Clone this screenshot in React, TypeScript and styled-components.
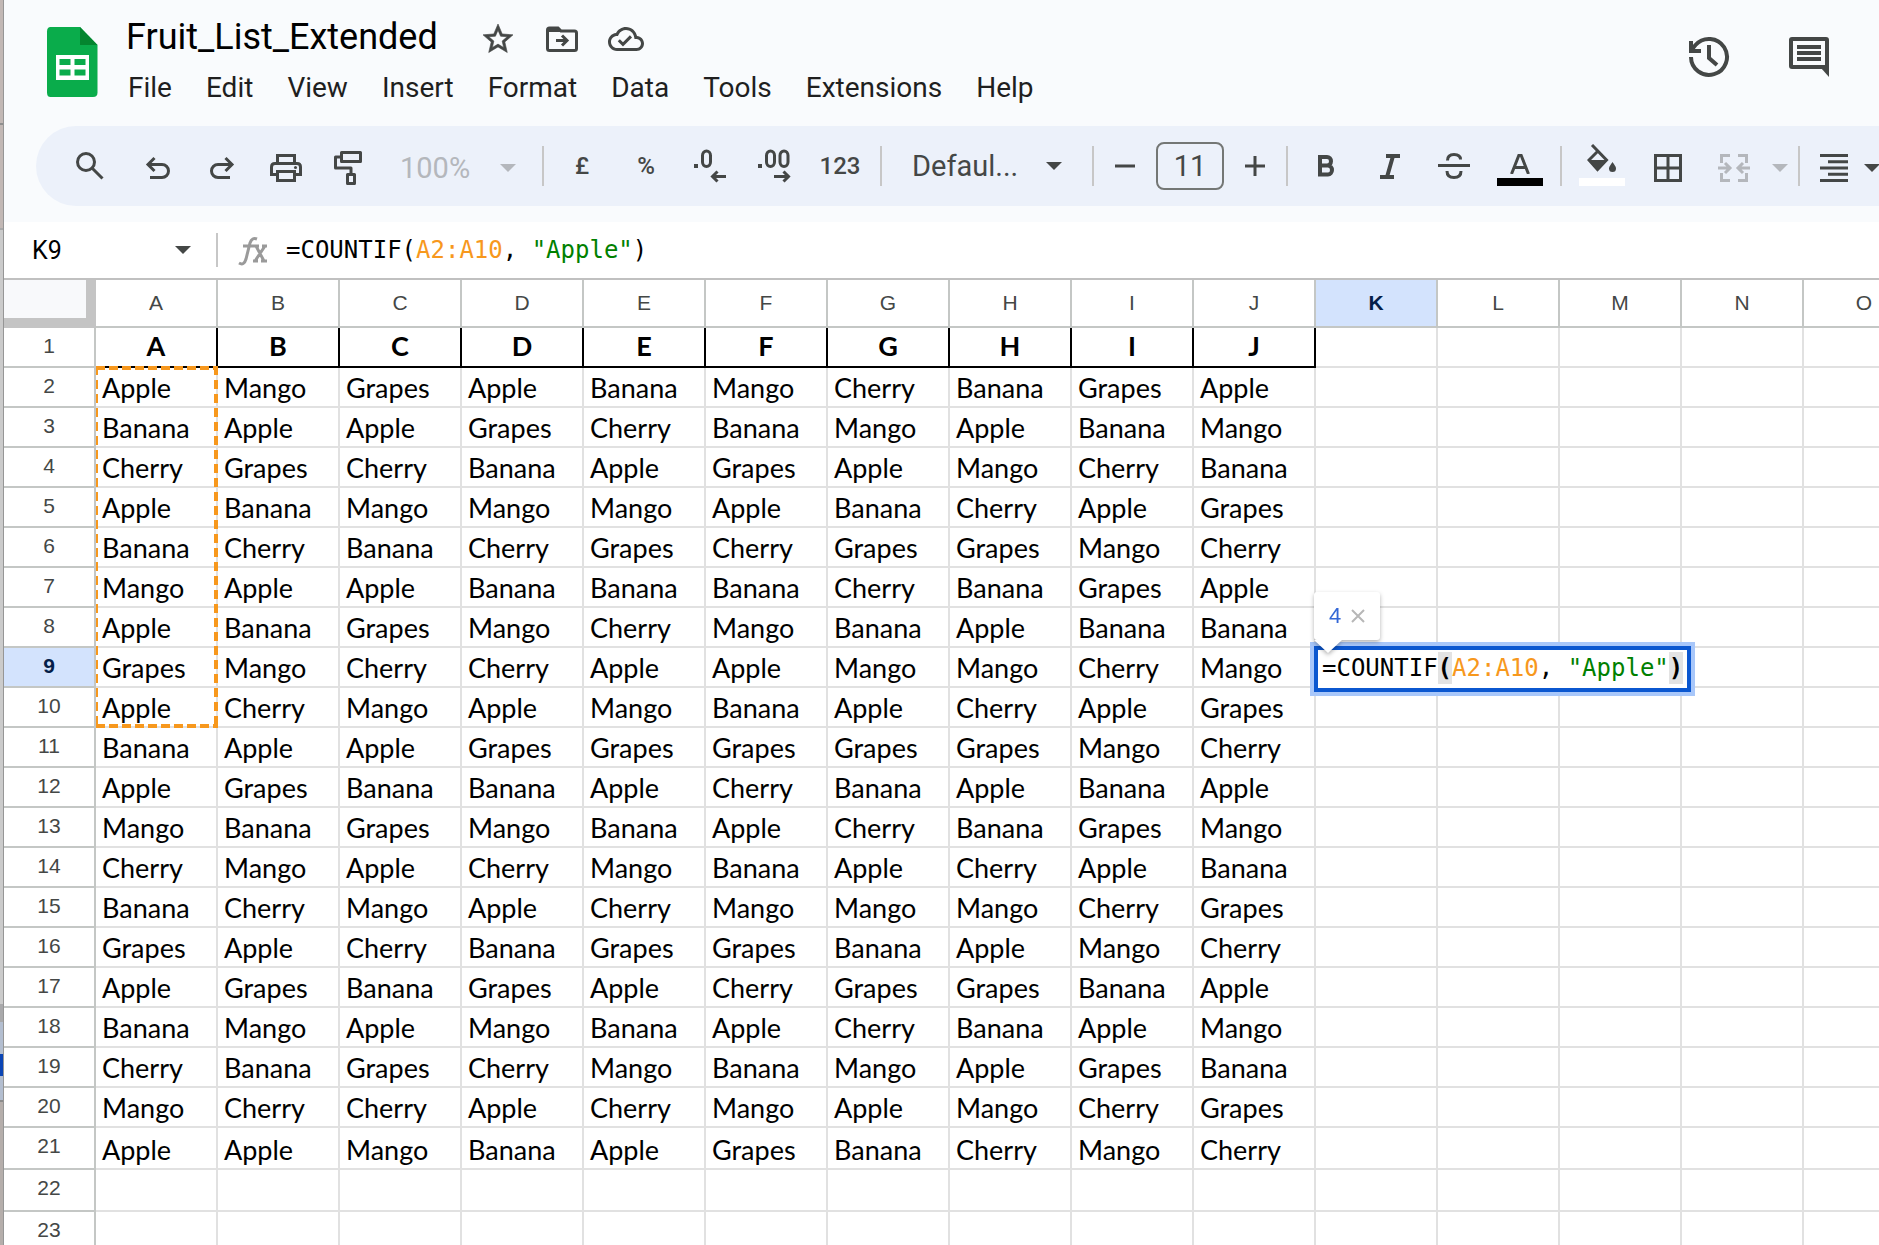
import React from "react";
import styled, { createGlobalStyle, css } from "styled-components";

const ink = "#444746";
const muted = "#b4b7bc";
const uiFont = `Roboto, "Noto Sans", sans-serif`;
const codeFont = `"DejaVu Sans Mono", "Liberation Mono", monospace`;
const cellFont = `Lato, "Open Sans", sans-serif`;
const headFont = `"Liberation Sans", Arial, sans-serif`;

const GlobalStyle = createGlobalStyle`
  *, *::before, *::after { box-sizing: border-box; }
  body { margin: 0; background: #fff; font-family: ${uiFont}; }
  button, input, select { font: inherit; color: inherit; border: 0; padding: 0; margin: 0; background: none; outline: 0; }
  button { cursor: pointer; }
`;

const Page = styled.div`
  display: grid;
  grid-template-columns: 4px minmax(0, 1fr);
  height: 100vh;
  overflow: hidden;
`;

const Edge = styled.div`
  border-right: 1px solid #969696;
  background: linear-gradient(
    to bottom,
    #c2b8b5 0 123px, #8f8f8f 123px 125px, #c2b8b5 125px 228px,
    #a9a9a9 228px 230px, #cbcbcb 230px 1004px, #a9a9ab 1004px 1022px,
    #b3bed0 1022px 1054px, #0b45b5 1054px 1076px, #b3bed0 1076px 1100px,
    #8c8c8c 1100px 1102px, #b5aeab 1102px
  );
`;

const Main = styled.div`
  display: flex;
  flex-direction: column;
  min-width: 0;
  overflow: hidden;
`;

const Top = styled.header`
  background: #f9fbfd;
  padding-bottom: 16px;
`;

const TitleArea = styled.div`
  display: flex;
  height: 126px;
  padding: 13px 48px 0 42px;
`;

const Logo = styled.svg`
  width: 52px;
  height: 72px;
  margin-top: 13px;
  flex: none;
`;

const TitleColumn = styled.div`
  flex: 1;
  margin-left: 24px;
`;

const TitleRow = styled.div`
  display: flex;
  align-items: center;
  gap: 28px;
  height: 52px;
`;

const TitleInput = styled.input`
  width: 330px;
  height: 52px;
  padding: 0 0 4px 4px;
  font-size: 36px;
  color: #000;
`;

const IconButton = styled.button`
  display: flex;
  align-items: center;
  justify-content: center;
  color: ${ink};
`;

const TitleIcon = styled(IconButton)`
  width: 36px;
  height: 36px;
`;

const MenuBar = styled.nav`
  display: flex;
  gap: 34px;
  padding-left: 6px;
`;

const MenuItem = styled.button`
  font-size: 28px;
  line-height: 46px;
  color: #1f1f1f;
`;

const Actions = styled.div`
  display: flex;
  align-items: flex-start;
  gap: 56px;
  padding-top: 22px;
`;

const Toolbar = styled.div`
  display: flex;
  align-items: center;
  height: 80px;
  margin-left: 32px;
  padding-left: 20px;
  border-radius: 40px 0 0 40px;
  background: #ecf1fa;
  color: ${ink};
  overflow: hidden;
`;

const Tool = styled.button<{ $w?: number; $muted?: boolean; $low?: boolean }>`
  display: flex;
  flex: none;
  align-items: center;
  justify-content: center;
  width: ${(p) => p.$w ?? 64}px;
  height: 64px;
  padding-top: ${(p) => (p.$low ? 4 : 0)}px;
  font-size: 24px;
  font-weight: 500;
  color: ${(p) => (p.$muted ? muted : ink)};
`;

const Divider = styled.span`
  flex: none;
  width: 2px;
  height: 40px;
  margin: 0 6px;
  background: #c7c7c7;
`;

const Drop = styled.label<{ $w: number; $end: number; $muted?: boolean }>`
  display: flex;
  flex: none;
  align-items: center;
  justify-content: space-between;
  width: ${(p) => p.$w}px;
  padding: ${(p) => (p.$muted ? 4 : 0)}px ${(p) => p.$end}px 0 24px;
  color: ${(p) => (p.$muted ? muted : ink)};
`;

const DropSelect = styled.select`
  appearance: none;
  font-size: 29px;
  line-height: 40px;
  color: inherit;
  opacity: 1;
`;

const SizeInput = styled.input`
  flex: none;
  width: 68px;
  height: 48px;
  margin: 0 6px;
  border: 2px solid #747775;
  border-radius: 8px;
  font-size: 29px;
  text-align: center;
`;

const Swatch = styled.span<{ $color: string }>`
  width: 46px;
  height: 8px;
  background: ${(p) => p.$color};
`;

const ColorStack = styled.span`
  display: flex;
  flex-direction: column;
  align-items: center;
  align-self: flex-end;
  gap: 4px;
  padding-bottom: 12px;
`;

const FormulaRow = styled.div`
  display: flex;
  align-items: center;
  height: 58px;
  border-bottom: 2px solid #c0c0c0;
  background: #fff;
`;

const NameInput = styled.input`
  width: 146px;
  padding-left: 28px;
  font-size: 25px;
  color: #000;
`;

const NameButton = styled(IconButton)`
  width: 66px;
  height: 48px;
`;

const BarRule = styled.span`
  width: 2px;
  height: 34px;
  background: #c7c7c7;
`;

const FxIcon = styled.svg`
  width: 30px;
  height: 30px;
  margin: 2px 18px 0 20px;
  color: #9a9a9a;
`;

const Formula = styled.div`
  flex: 1;
  font-family: ${codeFont};
  font-size: 24px;
  line-height: 34px;
  color: #000;
  white-space: pre;
  outline: 0;
`;

const RangeRef = styled.span`
  color: #f7981d;
`;

const Str = styled.span`
  color: #008000;
`;

const Paren = styled.span`
  padding: 2px 0;
  background: #e3e3e3;
  font-weight: 700;
`;

const Sheet = styled.div`
  flex: 1;
  overflow: hidden;
`;

const Grid = styled.table`
  table-layout: fixed;
  width: 1922px;
  border-spacing: 0;
  border-collapse: separate;
`;

const HeadCol = styled.col`
  width: 92px;
`;

const DataCol = styled.col`
  width: 122px;
`;

const Corner = styled.td`
  padding: 0;
  border-right: 10px solid #c4c4c4;
  border-bottom: 10px solid #c4c4c4;
  background: #f8f9fb;
`;

const active = css`
  background: #d3e3fd;
  color: #041e49;
  font-weight: 700;
`;

const ColHead = styled.th<{ $active: boolean }>`
  height: 48px;
  padding: 0;
  border-right: 2px solid #c4c7c5;
  border-bottom: 2px solid #c4c7c5;
  font: 400 21px/46px ${headFont};
  color: ${ink};
  ${(p) => p.$active && active}
`;

const RowHead = styled.th<{ $active: boolean }>`
  padding: 0;
  border-right: 2px solid #c4c7c5;
  border-bottom: 2px solid #c4c7c5;
  font: 400 21px/36px ${headFont};
  color: ${ink};
  vertical-align: top;
  ${(p) => p.$active && active}
`;

const Row = styled.tr<{ $tall: boolean }>`
  height: ${(p) => (p.$tall ? 42 : 40)}px;
`;

const Cell = styled.td<{ $title: boolean }>`
  position: relative;
  padding: ${(p) => (p.$title ? "0" : "0 0 0 6px")};
  border-right: 2px solid ${(p) => (p.$title ? "#000" : "#e1e1e1")};
  border-bottom: 2px solid ${(p) => (p.$title ? "#000" : "#e1e1e1")};
  font-family: ${cellFont};
  font-size: 27px;
  line-height: 36px;
  font-weight: ${(p) => (p.$title ? 700 : 400)};
  text-align: ${(p) => (p.$title ? "center" : "left")};
  vertical-align: ${(p) => (p.$title ? "top" : "bottom")};
  color: #000;
  white-space: nowrap;
`;

const dashH = "repeating-linear-gradient(90deg, #f7981d 0 9px, transparent 9px 13px)";
const dashV = "repeating-linear-gradient(180deg, #f7981d 0 9px, transparent 9px 14px)";

const RangeOutline = styled.div`
  position: absolute;
  z-index: 1;
  top: -2px;
  left: 0;
  width: 122px;
  height: 362px;
  background:
    ${dashH} top / 100% 4px no-repeat,
    ${dashH} bottom / 100% 4px no-repeat,
    ${dashV} left / 2px 100% no-repeat,
    ${dashV} right / 4px 100% no-repeat;
`;

const Editor = styled.div`
  position: absolute;
  z-index: 2;
  top: -2px;
  left: -2px;
  height: 46px;
  padding: 0 4px;
  border: 4px solid #0b57d0;
  background: #fff;
  box-shadow: 0 0 0 4px #a8c7fa;
`;

const EditorText = styled(Formula)`
  line-height: 36px;
`;

const Preview = styled.div`
  position: absolute;
  z-index: 3;
  bottom: 46px;
  left: -2px;
  display: flex;
  align-items: center;
  gap: 10px;
  height: 48px;
  padding: 0 15px;
  border-radius: 3px;
  background: #fff;
  filter: drop-shadow(0 2px 2px rgba(0, 0, 0, 0.3));
  font: 400 22px/48px ${headFont};
  color: #3367d6;

  &::after {
    content: "";
    position: absolute;
    top: 48px;
    left: 0;
    border: 14px solid transparent;
    border-top: 13px solid #fff;
    border-bottom: 0;
  }
`;

const Caret = ({ w = 16 }: { w?: number }) => (
  <svg width={w} height={8} viewBox="0 0 16 8" aria-hidden="true">
    <path d="M0 0h16L8 8z" fill="currentColor" />
  </svg>
);

type DrawProps = { w: number; h: number; sw?: number; children: React.ReactNode };
const Draw = ({ w, h, sw = 3, children }: DrawProps) => (
  <svg width={w} height={h} viewBox={`0 0 ${w} ${h}`} fill="none" stroke="currentColor" strokeWidth={sw} aria-hidden="true">
    {children}
  </svg>
);

const StarIcon = () => (
  <svg width={36} height={36} viewBox="0 0 24 24" fill="currentColor" stroke="currentColor" strokeWidth={0.4} aria-hidden="true">
    <path d="M22 9.24l-7.19-.62L12 2 9.19 8.63 2 9.24l5.46 4.73L5.82 21 12 17.27 18.18 21l-1.63-7.03L22 9.24zM12 15.4l-3.76 2.27 1-4.28-3.32-2.88 4.38-.38L12 6.1l1.71 4.04 4.38.38-3.32 2.88 1 4.28L12 15.4z" />
  </svg>
);
const MoveIcon = () => (
  <Draw w={34} h={28}>
    <path d="M2.500 5v18.500q0 2 2 2h25q2 0 2-2V8q0-2-2-2H16l-3-3H4.500q-2 0-2 2z" />
    <path d="M3 2.500h9.500L16 7H3z" fill="currentColor" stroke="none" />
    <path d="M11 15.500h10M17 10.500l5 5-5 5" />
  </Draw>
);
const CloudIcon = () => (
  <svg width={36} height={36} viewBox="0 0 24 24" fill="currentColor" aria-hidden="true">
    <path d="M19.35 10.04C18.67 6.59 15.64 4 12 4 9.11 4 6.6 5.64 5.35 8.04 2.34 8.36 0 10.91 0 14c0 3.31 2.69 6 6 6h13c2.76 0 5-2.24 5-5 0-2.64-2.05-4.78-4.65-4.96zM19 18H6c-2.21 0-4-1.79-4-4 0-2.05 1.53-3.76 3.56-3.97l1.07-.11.5-.95C8.08 7.14 9.94 6 12 6c2.62 0 4.88 1.86 5.39 4.43l.3 1.5 1.53.11c1.56.1 2.78 1.41 2.78 2.96 0 1.65-1.35 3-3 3zm-9-3.82l-2.09-2.09L6.5 13.500 10 17l6.01-6.010-1.410-1.410z" />
  </svg>
);
const HistoryIcon = () => (
  <Draw w={44} h={44} sw={4}>
    <path d="M4 22a18 18 0 1 0 4.500-12L4 15.500" />
    <path d="M4 6v10h10M22 10v13l8 7" />
  </Draw>
);
const CommentIcon = () => (
  <Draw w={44} h={44} sw={4}>
    <path d="M5 4h34q1 0 1 1v27H5q-1 0-1-1V5q0-1 1-1z" />
    <path d="M34 33h8v9z" fill="currentColor" stroke="none" />
    <path d="M10 12h24M10 18h24M10 24h24" />
  </Draw>
);

const SearchIcon = () => (
  <Draw w={28} h={28}>
    <circle cx="10" cy="10" r="8.500" />
    <path d="M16 16l10.500 10.500" />
  </Draw>
);
const UndoIcon = () => (
  <Draw w={26} h={24}>
    <path d="M5 21.500h12a6.500 6.500 0 0 0 0-13H3M9.500 2L3 8.500 9.500 15" />
  </Draw>
);
const RedoIcon = () => (
  <Draw w={26} h={24}>
    <path d="M21 21.500H9a6.500 6.500 0 0 1 0-13h14M16.500 2L23 8.500 16.500 15" />
  </Draw>
);
const PrintIcon = () => (
  <Draw w={32} h={28}>
    <path d="M7.500 9V1.500h17V9M7.500 20.500h-6V13q0-3.500 3.500-3.500h22q3.500 0 3.500 3.500v7.500h-6M7.500 17.500h17v9h-17z" />
    <circle cx="25.500" cy="13.500" r="1.500" fill="currentColor" stroke="none" />
  </Draw>
);
const PaintIcon = () => (
  <Draw w={28} h={34}>
    <path d="M7.500 1.500h19v9h-19zM7 6H1.500v11H17v6M13.500 23.500h7v9h-7z" strokeLinejoin="round" />
  </Draw>
);
const DecLessIcon = () => (
  <Draw w={34} h={34}>
    <path d="M1 15h4v4H1z" fill="currentColor" stroke="none" />
    <path d="M9.500 6.500a4 4.500 0 0 1 8 0v6.500a4 4.500 0 0 1-8 0z" />
    <path d="M33 27.500H20M24.500 22.500l-5 5 5 5" />
  </Draw>
);
const DecMoreIcon = () => (
  <Draw w={34} h={34}>
    <path d="M1 15h4v4H1z" fill="currentColor" stroke="none" />
    <path d="M9.500 6.500a4 4.500 0 0 1 8 0v6.500a4 4.500 0 0 1-8 0zM23 6.500a4 4.500 0 0 1 8 0v6.500a4 4.500 0 0 1-8 0z" />
    <path d="M17 27.500h14M26.500 22.500l5 5-5 5" />
  </Draw>
);
const MinusIcon = () => (
  <Draw w={20} h={20}><path d="M0 10h20" /></Draw>
);
const PlusIcon = () => (
  <Draw w={20} h={20}><path d="M0 10h20M10 0v20" /></Draw>
);
const BoldIcon = () => (
  <Draw w={18} h={24} sw={4}>
    <path d="M3 3h7a4 4.250 0 0 1 0 8.500H3zM3 11.500h8a4 4.500 0 0 1 0 9H3z" />
  </Draw>
);
const ItalicIcon = () => (
  <Draw w={22} h={26} sw={4}>
    <path d="M7 3h14M1 24h14M14 3L8 24" />
  </Draw>
);
const StrikeIcon = () => (
  <Draw w={32} h={26}>
    <path d="M0 12.500h32M9.500 7.500q0-6 6.500-6t6.500 5M9 18q0 6.500 7 6.500t7-6.500" />
  </Draw>
);
const LetterAIcon = () => (
  <Draw w={20} h={20}>
    <path d="M1.500 20L9 1h2l7.500 19M4.500 13.500h11" />
  </Draw>
);
const FillIcon = () => (
  <Draw w={30} h={30}>
    <path d="M5 1l14.500 15-9 9.500L2 16l9-9" />
    <path d="M2 16h18l-9.500 10.500z" fill="currentColor" stroke="none" />
    <path d="M25.500 18c2 3 3.500 4.500 3.500 6.500a3.500 3.500 0 0 1-7 0c0-2 1.500-3.500 3.500-6.500z" fill="currentColor" stroke="none" />
  </Draw>
);
const BordersIcon = () => (
  <Draw w={28} h={28}>
    <path d="M1.500 1.500h25v25h-25zM14 1.500v25M1.500 14h25" />
  </Draw>
);
const MergeIcon = () => (
  <Draw w={32} h={28}>
    <path d="M12 1.500H3.500V9M20 1.500h8.500V9M12 26.500H3.500V19M20 26.500h8.500V19M0 14h11M7 9l5 5-5 5M32 14H21M25 9l-5 5 5 5" />
  </Draw>
);
const AlignIcon = () => (
  <Draw w={28} h={28}>
    <path d="M0 1.500h28M8 7.750h20M0 14h28M8 20.250h20M0 26.500h28" />
  </Draw>
);

const menus = ["File", "Edit", "View", "Insert", "Format", "Data", "Tools", "Extensions", "Help"];
const columns = "ABCDEFGHIJKLMNO".split("");

const fruit: Record<string, string> = { A: "Apple", B: "Banana", C: "Cherry", G: "Grapes", M: "Mango" };
const data = [
  "AMGABMCBGA", "BAAGCBMABM", "CGCBAGAMCB", "ABMMMABCAG", "BCBCGCGGMC",
  "MAABBBCBGA", "ABGMCMBABB", "GMCCAAMMCM", "ACMAMBACAG", "BAAGGGGGMC",
  "AGBBACBABA", "MBGMBACBGM", "CMACMBACAB", "BCMACMMMCG", "GACBGGBAMC",
  "AGBGACGGBA", "BMAMBACBAM", "CBGCMBMAGB", "MCCACMAMCG", "AAMBAGBCMC",
];

const valueAt = (row: number, col: number) => {
  if (row === 1) return col < 10 ? columns[col] : "";
  const key = data[row - 2]?.[col];
  return key ? fruit[key] : "";
};

export default function App() {
  return (
    <Page>
      <GlobalStyle />
      <Edge />
      <Main>
        <Top>
          <TitleArea>
            <Logo viewBox="0 0 52 72" aria-label="Sheets">
              <path d="M4.500 1H34l17.500 18v47.500q0 4.500-4.500 4.500H4.500Q1 71 1 66.500v-61Q1 1 4.500 1z" fill="#0aac4b" />
              <path d="M34 1l17.500 18H34z" fill="#04852f" />
              <path d="M10 29h33v25H10z" fill="#fff" />
              <path d="M13.500 33h11v6h-11zM28.500 33h11v6h-11zM13.500 43.500h11v6h-11zM28.500 43.500h11v6h-11z" fill="#0aac4b" />
            </Logo>
            <TitleColumn>
              <TitleRow>
                <TitleInput aria-label="Document name" defaultValue="Fruit_List_Extended" />
                <TitleIcon aria-label="Star"><StarIcon /></TitleIcon>
                <TitleIcon aria-label="Move"><MoveIcon /></TitleIcon>
                <TitleIcon aria-label="Saved to cloud"><CloudIcon /></TitleIcon>
              </TitleRow>
              <MenuBar>
                {menus.map((m) => <MenuItem key={m}>{m}</MenuItem>)}
              </MenuBar>
            </TitleColumn>
            <Actions>
              <IconButton aria-label="Version history"><HistoryIcon /></IconButton>
              <IconButton aria-label="Comments"><CommentIcon /></IconButton>
            </Actions>
          </TitleArea>
          <Toolbar role="toolbar">
            <Tool aria-label="Search" $w={68}><SearchIcon /></Tool>
            <Tool aria-label="Undo" $w={68} $low><UndoIcon /></Tool>
            <Tool aria-label="Redo" $w={60} $low><RedoIcon /></Tool>
            <Tool aria-label="Print" $w={68} $low><PrintIcon /></Tool>
            <Tool aria-label="Paint format" $w={56} $low><PaintIcon /></Tool>
            <Drop $w={160} $end={20} $muted>
              <DropSelect aria-label="Zoom"><option>100%</option></DropSelect>
              <Caret />
            </Drop>
            <Divider />
            <Tool>£</Tool>
            <Tool>%</Tool>
            <Tool aria-label="Decrease decimal places"><DecLessIcon /></Tool>
            <Tool aria-label="Increase decimal places"><DecMoreIcon /></Tool>
            <Tool $w={68}>123</Tool>
            <Divider />
            <Drop $w={198} $end={24}>
              <DropSelect aria-label="Font"><option>Defaul...</option></DropSelect>
              <Caret />
            </Drop>
            <Divider />
            <Tool aria-label="Decrease font size" $w={50}><MinusIcon /></Tool>
            <SizeInput aria-label="Font size" defaultValue="11" />
            <Tool aria-label="Increase font size" $w={50}><PlusIcon /></Tool>
            <Divider />
            <Tool aria-label="Bold"><BoldIcon /></Tool>
            <Tool aria-label="Italic"><ItalicIcon /></Tool>
            <Tool aria-label="Strikethrough"><StrikeIcon /></Tool>
            <Tool aria-label="Text colour" $w={68}>
              <ColorStack><LetterAIcon /><Swatch $color="#000" /></ColorStack>
            </Tool>
            <Divider />
            <Tool aria-label="Fill colour" $w={68}>
              <ColorStack><FillIcon /><Swatch $color="#fff" /></ColorStack>
            </Tool>
            <Tool aria-label="Borders" $low><BordersIcon /></Tool>
            <Tool aria-label="Merge cells" $w={68} $muted $low><MergeIcon /></Tool>
            <Tool aria-label="Merge options" $w={24} $muted $low><Caret /></Tool>
            <Divider />
            <Tool aria-label="Horizontal align" $w={56} $low><AlignIcon /></Tool>
            <Tool aria-label="Align options" $w={20} $low><Caret /></Tool>
          </Toolbar>
        </Top>
        <FormulaRow>
          <NameInput aria-label="Name box" defaultValue="K9" />
          <NameButton aria-label="Named ranges"><Caret /></NameButton>
          <BarRule />
          <FxIcon viewBox="0 0 30 30" fill="none" stroke="currentColor" strokeWidth={3} aria-hidden="true">
            <path d="M1 27q5 3 7-4l4-16q2-6 7-4M5 10h11M16 10h5M24 10h5M15 25h5M23 25h6M18 10l8 15M27 10L17 25" />
          </FxIcon>
          <Formula role="textbox" aria-label="Formula" contentEditable suppressContentEditableWarning>
            =COUNTIF(<RangeRef>A2:A10</RangeRef>, <Str>"Apple"</Str>)
          </Formula>
        </FormulaRow>
        <Sheet>
          <Grid>
            <colgroup>
              <HeadCol />
              {columns.map((c) => <DataCol key={c} />)}
            </colgroup>
            <thead>
              <tr>
                <Corner />
                {columns.map((c) => <ColHead key={c} scope="col" $active={c === "K"}>{c}</ColHead>)}
              </tr>
            </thead>
            <tbody>
              {Array.from({ length: 23 }, (_, i) => i + 1).map((row) => (
                <Row key={row} $tall={row > 20}>
                  <RowHead scope="row" $active={row === 9}>{row}</RowHead>
                  {columns.map((c, col) => (
                    <Cell key={c} $title={row === 1 && col < 10}>
                      {valueAt(row, col)}
                      {c === "A" && row === 2 && <RangeOutline />}
                      {c === "K" && row === 9 && (
                        <>
                          <Editor>
                            <EditorText role="textbox" aria-label="Cell K9" contentEditable suppressContentEditableWarning>
                              =COUNTIF<Paren>(</Paren><RangeRef>A2:A10</RangeRef>, <Str>"Apple"</Str><Paren>)</Paren>
                            </EditorText>
                          </Editor>
                          <Preview>
                            4
                            <IconButton aria-label="Close preview">
                              <svg width="14" height="14" viewBox="0 0 14 14" stroke="#b7b7b7" strokeWidth="2">
                                <path d="M1 1l12 12M13 1L1 13" />
                              </svg>
                            </IconButton>
                          </Preview>
                        </>
                      )}
                    </Cell>
                  ))}
                </Row>
              ))}
            </tbody>
          </Grid>
        </Sheet>
      </Main>
    </Page>
  );
}
